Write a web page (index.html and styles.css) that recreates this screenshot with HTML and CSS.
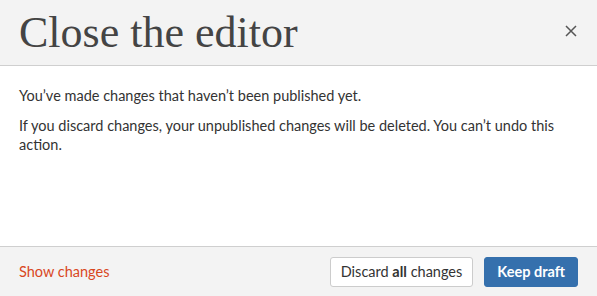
FILE: index.html
```html
<!DOCTYPE html>
<html>
<head>
<meta charset="utf-8">
<link rel="stylesheet" href="styles.css">
</head>
<body>
<div class="dialog">
  <header class="dialog-header">
    <h1 class="title">Close the editor</h1>
    <button class="close" aria-label="Close">
      <svg width="12" height="12" viewBox="0 0 12 12"><path d="M1 1L11 11M11 1L1 11" stroke="#555" stroke-width="1.5" fill="none"/></svg>
    </button>
  </header>
  <main class="dialog-body">
    <p>You’ve made changes that haven’t been published yet.</p>
    <p>If you discard changes, your unpublished changes will be deleted. You can’t undo this action.</p>
  </main>
  <footer class="dialog-footer">
    <a class="link" href="#">Show changes</a>
    <div class="actions">
      <button class="btn btn-secondary">Discard <b>all</b> changes</button>
      <button class="btn btn-primary">Keep draft</button>
    </div>
  </footer>
</div>
</body>
</html>
```

FILE: styles.css
```css
html, body {
  margin: 0;
  padding: 0;
  background: #fff;
}
.dialog {
  width: 597px;
  height: 296px;
  display: flex;
  flex-direction: column;
  font-family: Lato, "Liberation Sans", sans-serif;
  color: #333;
}
.dialog-header {
  height: 65px;
  background: #f3f3f3;
  border-bottom: 1px solid #cfcfcf;
  display: flex;
  align-items: center;
  justify-content: space-between;
  padding: 0 20px 0 19px;
  box-sizing: content-box;
}
.title {
  margin: 0;
  font-family: "Liberation Serif", "DejaVu Serif", serif;
  font-weight: normal;
  font-size: 44px;
  color: #444;
  line-height: 1;
  padding-top: 0;
}
.close {
  background: none;
  border: 0;
  padding: 0;
  width: 12px;
  height: 12px;
  display: flex;
  margin-top: -3px;
}
.dialog-body {
  flex: 1;
  padding: 20px 19px 0 19px;
  font-size: 14.5px;
  line-height: 19px;
}
.dialog-body p {
  margin: 0 0 11px 0;
}
.dialog-footer {
  height: 49px;
  background: #f3f3f3;
  border-top: 1px solid #cfcfcf;
  display: flex;
  align-items: center;
  justify-content: space-between;
  padding: 0 19px;
}
.link {
  color: #d9471e;
  text-decoration: none;
  font-size: 14.5px;
}
.actions {
  display: flex;
  gap: 11px;
  align-items: center;
}
.btn {
  font-family: Lato, "Liberation Sans", sans-serif;
  font-size: 14.5px;
  height: 30px;
  border-radius: 3px;
  padding: 0 10px;
  cursor: pointer;
}
.btn-secondary {
  background: #fff;
  border: 1px solid #ccc;
  color: #333;
}
.btn-primary {
  background: #3570ad;
  border: 1px solid #3570ad;
  color: #fff;
  font-weight: bold;
  padding: 0 12px;
}
```
